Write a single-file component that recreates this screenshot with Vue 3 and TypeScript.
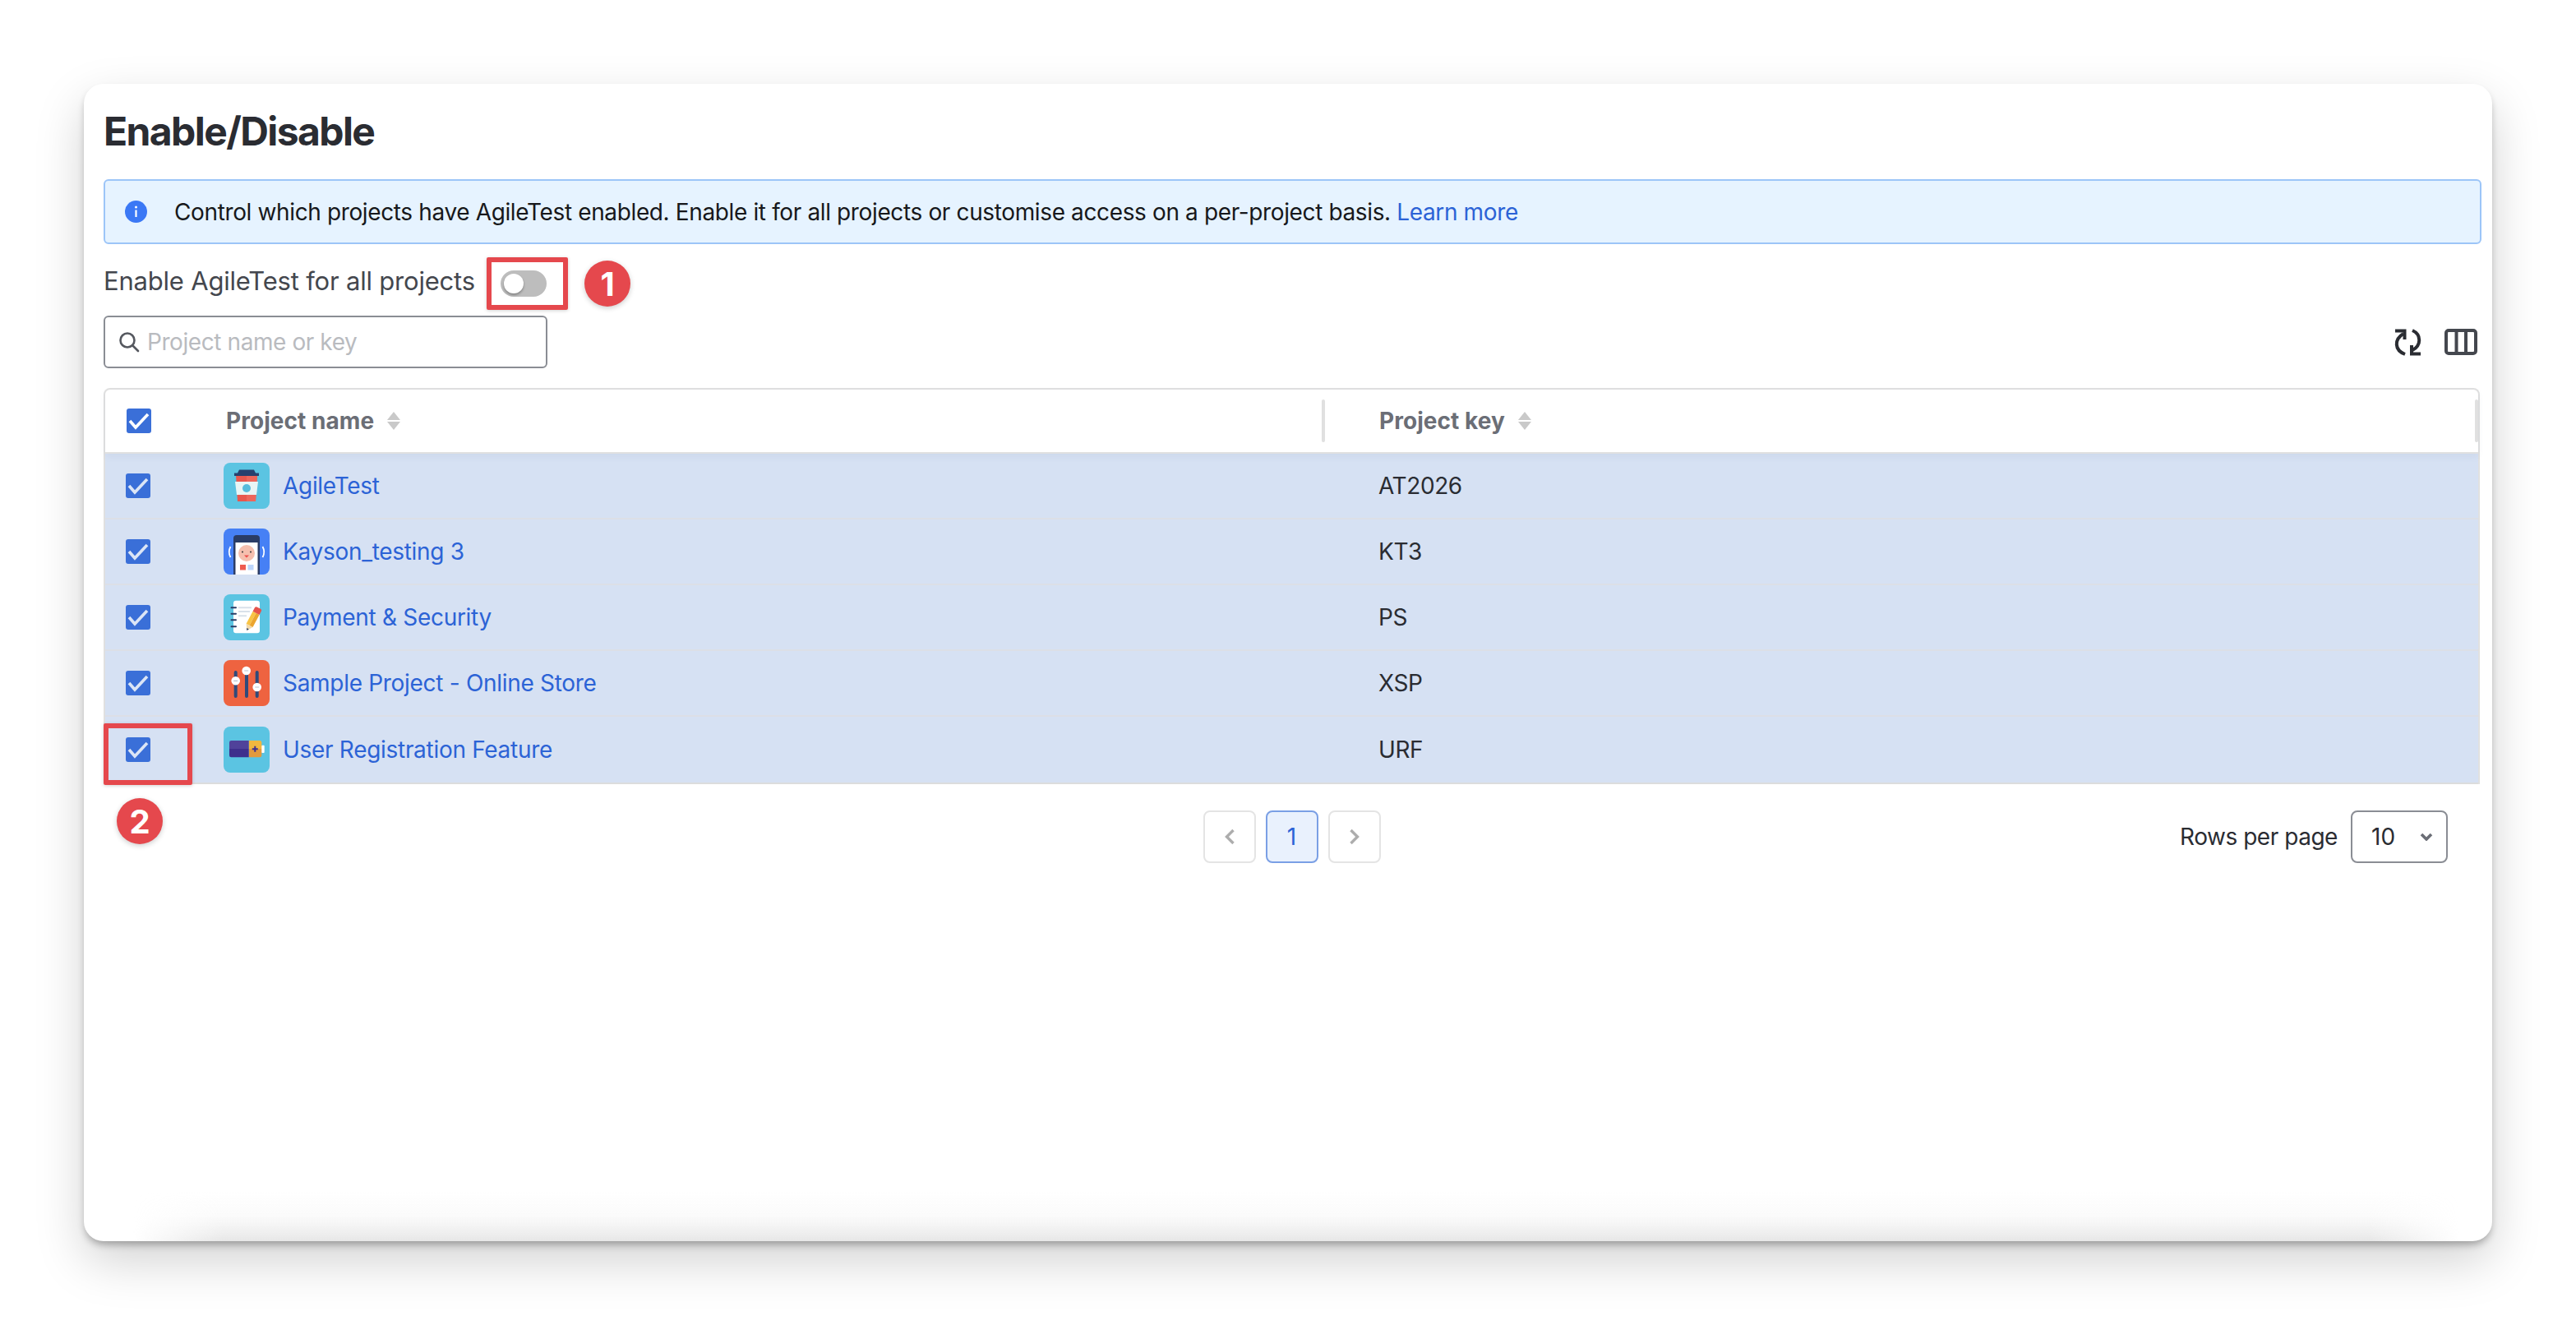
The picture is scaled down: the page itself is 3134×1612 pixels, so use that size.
<script setup lang="ts">
interface Project { id: string; name: string; key: string }
const projects: Project[] = [
  { id: 'cup', name: 'AgileTest', key: 'AT2026' },
  { id: 'phone', name: 'Kayson_testing 3', key: 'KT3' },
  { id: 'note', name: 'Payment & Security', key: 'PS' },
  { id: 'sliders', name: 'Sample Project - Online Store', key: 'XSP' },
  { id: 'battery', name: 'User Registration Feature', key: 'URF' },
]
</script>

<template>
  <div class="page">
    <main class="card">
      <h1 class="title">Enable/Disable</h1>

      <div class="alert">
        <svg class="info" viewBox="0 0 27 27" width="27" height="27">
          <circle cx="13.5" cy="13.5" r="13.5" fill="#3b78f5" />
          <rect x="12.4" y="11.5" width="2.2" height="8.5" fill="#fff" />
          <circle cx="13.5" cy="8" r="1.5" fill="#fff" />
        </svg>
        <p class="alert-text">
          Control which projects have AgileTest enabled. Enable it for all projects or customise access on a
          per-project basis. <a class="link" href="#">Learn more</a>
        </p>
      </div>

      <div class="enable-row">
        <span class="enable-label">Enable AgileTest for all projects</span>
        <span class="toggle"><span class="knob"></span></span>
      </div>

      <div class="toolbar">
        <label class="search">
          <svg viewBox="0 0 26 26" width="26" height="26" fill="none" stroke="#55585f" stroke-width="2.6" stroke-linecap="round">
            <circle cx="11" cy="11" r="8.5" />
            <path d="M17.5 17.5L24 24" />
          </svg>
          <span class="placeholder">Project name or key</span>
        </label>
        <div class="tools">
          <svg viewBox="0 0 33 33" width="33" height="33" fill="none" stroke="#2a2c32" stroke-width="4">
            <path d="M11 6C-0.5 13 0 26 13 31" />
            <path d="M1 2.500H12.500V13" />
            <path d="M22 2C33 7 33 20 22 26" />
            <path d="M32 30.500H21V20" />
          </svg>
          <svg viewBox="0 0 40 32" width="40" height="32" fill="none" stroke="#44474e" stroke-width="4">
            <rect x="2" y="2" width="36" height="28" rx="3" />
            <path d="M14.5 2V30M26 2V30" />
          </svg>
        </div>
      </div>

      <section class="table">
        <div class="row head">
          <div class="cell-check"><span class="check check-head"><svg viewBox="0 0 30 30" width="30" height="30"><path d="M4 15L11 23L26 7" fill="none" stroke="#fff" stroke-width="3.6" /></svg></span></div>
          <div class="head-name">
            <span>Project name</span>
            <svg viewBox="0 0 16 22" width="16" height="22"><path d="M8 0L16 10H0Z M0 12H16L8 22Z" fill="#c9c9c9" /></svg>
            <i class="divider"></i>
          </div>
          <div class="head-key">
            <span>Project key</span>
            <svg viewBox="0 0 16 22" width="16" height="22"><path d="M8 0L16 10H0Z M0 12H16L8 22Z" fill="#c9c9c9" /></svg>
            <i class="divider"></i>
          </div>
        </div>

        <div v-for="p in projects" :key="p.id" class="row body">
          <div class="cell-check"><span class="check"><svg viewBox="0 0 30 30" width="30" height="30"><path d="M4 15L11 23L26 7" fill="none" stroke="#dbe5f6" stroke-width="3.6" /></svg></span></div>
          <div class="name-cell">
            <svg class="pic" viewBox="0 0 56 56" width="56" height="56">
              <template v-if="p.id === 'cup'">
                <rect width="56" height="56" rx="8" fill="#5bc4e2" />
                <path d="M15 15H41L39 47H17Z" fill="#e8574e" />
                <path d="M28 15H41L39 47H28Z" fill="#ee6a5f" opacity=".8" />
                <path d="M14 23H42L40 39H16Z" fill="#e8f5f5" />
                <circle cx="28" cy="31" r="5" fill="#56bcdc" />
                <path d="M19 8.5H37L39 12.5H43V16H13V12.5H17Z" fill="#27406e" />
              </template>
              <template v-else-if="p.id === 'phone'">
                <rect width="56" height="56" rx="8" fill="#4680f5" />
                <path d="M12 56V12Q12 8 16 8H40Q44 8 44 12V56Z" fill="#2a3c66" />
                <rect x="14.5" y="17" width="27" height="39" fill="#fff" />
                <circle cx="28" cy="30" r="10" fill="#f6bfae" />
                <circle cx="23" cy="28.5" r="1" fill="#333" />
                <circle cx="33" cy="28.5" r="1" fill="#333" />
                <path d="M25 32.500H31L28 35.500Z" fill="#ee4d4a" />
                <rect x="20" y="44" width="7" height="6.500" fill="#ee5b50" />
                <rect x="29.500" y="44" width="7" height="6.500" fill="#bcd5fb" />
                <path d="M8.500 22Q5 28.500 8.500 35M47.500 22Q51 28.500 47.500 35" fill="none" stroke="#fff" stroke-width="1.800" />
              </template>
              <template v-else-if="p.id === 'note'">
                <rect width="56" height="56" rx="8" fill="#5bc4e2" />
                <rect x="12" y="7.700" width="32" height="39.500" rx="3" fill="#fff" />
                <path d="M9.500 16.300H15M9.500 23.700H15M9.500 31.300H15M9.500 39.300H15" stroke="#2a3c66" stroke-width="2" stroke-linecap="round" />
                <path d="M18 16.300H34M18 21H32M18 26.300H28" stroke="#d9e1ea" stroke-width="2" />
                <g transform="translate(28.300 44) rotate(28)">
                  <path d="M0 0L-4.500 -7H4.500Z" fill="#f3d9a8" />
                  <path d="M0 0L-1.600 -2.500H1.600Z" fill="#2a3c66" />
                  <rect x="-4.500" y="-24" width="4.500" height="17" fill="#f8c344" />
                  <rect x="0" y="-24" width="4.500" height="17" fill="#eba52f" />
                  <path d="M-4.500 -24V-29Q-4.500 -31 -2.500 -31H2.500Q4.500 -31 4.500 -29V-24Z" fill="#e5534b" />
                </g>
              </template>
              <template v-else-if="p.id === 'sliders'">
                <rect width="56" height="56" rx="8" fill="#ee6340" />
                <path d="M14.700 15V44M28 15V44M40.700 15V44" stroke="#2f4a7a" stroke-width="4" stroke-linecap="round" />
                <g fill="#fff">
                  <circle cx="14.700" cy="25.300" r="5.300" />
                  <circle cx="27.700" cy="13" r="5.300" />
                  <circle cx="40.700" cy="33" r="5.300" />
                </g>
                <path d="M12.200 25.300H17.200M25.200 13H30.200M38.200 33H43.200" stroke="#b9c2cf" stroke-width="1.200" />
              </template>
              <template v-else>
                <rect width="56" height="56" rx="8" fill="#5bc4e2" />
                <rect x="46" y="22.700" width="3.700" height="9.300" rx="1" fill="#fff" />
                <path d="M30.700 17H44Q46.300 17 46.300 19.300V27H30.700Z" fill="#f1b73f" />
                <path d="M30.700 27H46.300V35Q46.300 37.300 44 37.300H30.700Z" fill="#e39a3c" />
                <path d="M9.300 17H30.700V27H7V19.300Q7 17 9.300 17Z" fill="#50429a" />
                <path d="M7 27H30.700V37.300H9.300Q7 37.300 7 35Z" fill="#3e2f8c" />
                <path d="M34.800 27.300H41.800M38.300 23.800V30.800" stroke="#3e2f8c" stroke-width="2" />
              </template>
            </svg>
            <a class="link name" href="#">{{ p.name }}</a>
          </div>
          <div class="key-cell">{{ p.key }}</div>
        </div>
      </section>

      <footer class="foot">
        <span></span>
        <nav class="pager">
          <span class="page-btn"><svg viewBox="0 0 14 20" width="14" height="20"><path d="M11.500 2L3.500 10L11.500 18" fill="none" stroke="#adadad" stroke-width="3.400" /></svg></span>
          <span class="page-btn active">1</span>
          <span class="page-btn"><svg viewBox="0 0 14 20" width="14" height="20"><path d="M2.500 2L10.500 10L2.500 18" fill="none" stroke="#adadad" stroke-width="3.400" /></svg></span>
        </nav>
        <div class="rows">
          <span class="rows-label">Rows per page</span>
          <span class="select">
            <span>10</span>
            <svg viewBox="0 0 16 10" width="16" height="10"><path d="M2 2L8 8L14 2" fill="none" stroke="#6b6e76" stroke-width="3.600" /></svg>
          </span>
        </div>
      </footer>

      <i class="fade"></i>
      <i class="mark mark-toggle"></i>
      <i class="mark mark-check"></i>
      <b class="badge badge-1">1</b>
      <b class="badge badge-2">2</b>
    </main>
  </div>
</template>

<style>
html, body { margin: 0; background: #fff; }
</style>

<style scoped>
.page {
  box-sizing: border-box;
  width: 3134px;
  height: 1612px;
  padding: 102px 102px 0 102px;
  overflow: hidden;
  background: #fff;
  font-family: Inter, "Liberation Sans", sans-serif;
  font-size: 28px;
  color: #2a2c32;
}
.card {
  position: relative;
  box-sizing: border-box;
  height: 1408px;
  padding: 30px 13px 0 24px;
  border-radius: 24px;
  background: #fff;
  box-shadow: 0 6px 10px -2px rgba(0, 0, 0, 0.3), 0 24px 60px 0 rgba(0, 0, 0, 0.18);
}
.title {
  margin: 0 0 30px;
  font-size: 48px;
  line-height: 56px;
  font-weight: 700;
  letter-spacing: -1.6px;
  color: #2a2c32;
}
.alert {
  box-sizing: border-box;
  display: flex;
  align-items: center;
  height: 79px;
  padding: 0 0 0 24px;
  border: 2px solid #9cc5f8;
  border-radius: 6px;
  background: #e6f3ff;
}
.info { flex: none; }
.alert-text {
  margin: 0 0 0 33px;
  font-size: 28px;
  letter-spacing: -0.37px;
  color: #17181b;
  white-space: nowrap;
}
.link { color: #2c63d6; text-decoration: none; }
.enable-row {
  display: flex;
  align-items: center;
  height: 64px;
  margin-top: 16px;
}
.enable-label {
  font-size: 31px;
  letter-spacing: -0.2px;
  line-height: 56px;
  margin-bottom: 6px;
  color: #44474e;
}
.toggle {
  display: flex;
  align-items: center;
  box-sizing: border-box;
  width: 56px;
  height: 32px;
  margin-left: 31px;
  padding-left: 4px;
  border-radius: 16px;
  background: #bdbdbd;
}
.knob {
  width: 24px;
  height: 24px;
  border-radius: 50%;
  background: #fff;
  box-shadow: 0 2px 3px rgba(0, 0, 0, 0.3);
}
.toolbar {
  display: flex;
  justify-content: space-between;
  align-items: center;
  margin-top: 7px;
  padding-right: 5px;
}
.search {
  box-sizing: border-box;
  display: flex;
  align-items: center;
  gap: 9px;
  width: 540px;
  height: 64px;
  padding-left: 16px;
  border: 2px solid #8a8d94;
  border-radius: 6px;
}
.placeholder { color: #b9bbbf; letter-spacing: -0.42px; }
.tools {
  display: flex;
  align-items: center;
  gap: 28px;
}
.table {
  margin: 24px 2px 0 0;
  border: 2px solid #e0e0e0;
  border-bottom: 0;
  border-radius: 8px 8px 0 0;
}
.row {
  display: grid;
  grid-template-columns: 144px 1340px 1fr;
  align-items: center;
}
.head {
  position: relative;
  z-index: 1;
  height: 76px;
  border-bottom: 2px solid #e0e0e0;
  box-shadow: 0 4px 8px rgba(60, 80, 120, 0.06);
  font-weight: 700;
  letter-spacing: 0.05px;
  color: #6b6e76;
}
.body {
  height: 78px;
  border-bottom: 2px solid #dcdfe6;
  background: #d6e1f3;
}
.body:last-child {
  height: 80px;
  border-bottom-color: #dcdcdc;
}
.cell-check { padding-left: 25px; }
.head .cell-check { padding-left: 26px; }
.check {
  display: block;
  width: 30px;
  height: 30px;
  border-radius: 3px;
  background: #3a6fd8;
}
.check svg { display: block; }
.head-name, .head-key {
  position: relative;
  display: flex;
  align-items: center;
  gap: 16px;
  height: 100%;
  padding-left: 3px;
}
.head-key { padding-left: 66px; }
.divider {
  position: absolute;
  right: 0;
  top: 12px;
  width: 4px;
  height: 52px;
  border-radius: 2px;
  background: #e0e0e0;
}
.name-cell {
  display: flex;
  align-items: center;
  gap: 16px;
}
.pic { flex: none; display: block; }
.name { letter-spacing: -0.3px; }
.key-cell { padding-left: 65px; letter-spacing: -0.4px; color: #2a2c32; }
.foot {
  display: grid;
  grid-template-columns: 1fr auto 1fr;
  align-items: center;
  margin: 32px 2px 0 0;
}
.pager {
  display: flex;
  gap: 12px;
}
.page-btn {
  box-sizing: border-box;
  display: flex;
  align-items: center;
  justify-content: center;
  width: 64px;
  height: 64px;
  border: 2px solid #e4e4e4;
  border-radius: 8px;
}
.page-btn.active {
  border-color: #7a9fe5;
  background: #e9f1fd;
  color: #2c63d6;
}
.rows {
  display: flex;
  justify-content: flex-end;
  align-items: center;
  gap: 16px;
  padding-right: 39px;
}
.rows-label { letter-spacing: -0.46px; }
.select {
  box-sizing: border-box;
  display: flex;
  align-items: center;
  justify-content: space-between;
  width: 118px;
  height: 64px;
  padding: 0 16px 0 23px;
  border: 2px solid #8a8d94;
  border-radius: 8px;
}
.fade {
  position: absolute;
  left: 60px;
  right: 40px;
  bottom: 0;
  height: 60px;
  background: linear-gradient(to bottom, rgba(226, 226, 226, 0), rgba(226, 226, 226, 0.15) 50%, rgba(226, 226, 226, 0.5) 80%, rgba(226, 226, 226, 0.85));
  -webkit-mask-image: linear-gradient(to right, transparent, #000 110px, #000 calc(100% - 110px), transparent);
  mask-image: linear-gradient(to right, transparent, #000 110px, #000 calc(100% - 110px), transparent);
}
.mark {
  position: absolute;
  box-sizing: border-box;
  border: 6px solid #e5484d;
  border-radius: 2px;
  box-shadow: 0 1px 4px rgba(0, 0, 0, 0.18);
}
.mark-toggle { left: 490px; top: 211px; width: 99px; height: 64px; }
.mark-check { left: 24px; top: 778px; width: 108px; height: 75px; }
.badge {
  position: absolute;
  display: flex;
  align-items: center;
  justify-content: center;
  width: 56px;
  height: 56px;
  border-radius: 50%;
  background: #e5484d;
  color: #fff;
  font-size: 40px;
  font-weight: 700;
  box-shadow: 0 2px 6px rgba(0, 0, 0, 0.2);
}
.badge-1 { left: 609px; top: 215px; }
.badge-2 { left: 40px; top: 869px; }
</style>
